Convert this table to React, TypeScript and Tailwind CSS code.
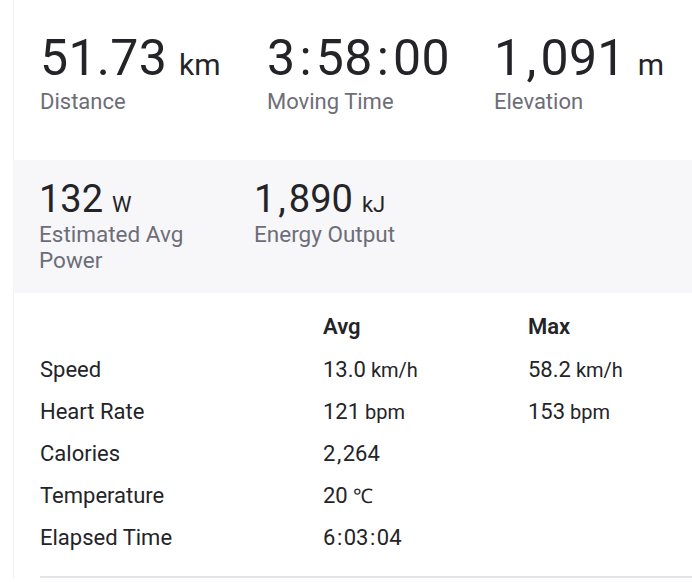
const topStats = [
  { value: '51.73', unit: 'km', label: 'Distance' },
  { value: '3:58:00', unit: '', label: 'Moving Time' },
  { value: '1,091', unit: 'm', label: 'Elevation' },
]

const rows = [
  { name: 'Speed', avg: '13.0', avgUnit: 'km/h', max: '58.2', maxUnit: 'km/h' },
  { name: 'Heart Rate', avg: '121', avgUnit: 'bpm', max: '153', maxUnit: 'bpm' },
  { name: 'Calories', avg: '2,264', avgUnit: '', max: '', maxUnit: '' },
  { name: 'Temperature', avg: '20', avgUnit: '℃', max: '', maxUnit: '' },
  { name: 'Elapsed Time', avg: '6:03:04', avgUnit: '', max: '', maxUnit: '' },
]

// the original face has roomier colons and commas than Roboto, so pad them out
function Num({ text, pad }: { text: string; pad: string }) {
  return (
    <>
      {text.split(/([:,])/).map((part, i) =>
        part === ':' || part === ',' ? (
          <span key={i} className={pad}>
            {part}
          </span>
        ) : (
          part
        )
      )}
    </>
  )
}

export default function App() {
  return (
    <div className="w-[692px] h-[582px] overflow-hidden bg-white text-[#242428] font-['Roboto',sans-serif]">
      {/* Headline stats */}
      <div className="ml-[13px] h-[160px] border-l border-[#efeff2] pl-[26px] pt-[30px] flex">
        {topStats.map((s) => (
          <div key={s.label} className="w-[227px] shrink-0">
            <div className="h-[59px] leading-[56px] whitespace-nowrap">
              <span className="text-[50px] tracking-[0.3px]">
                <Num text={s.value} pad="mx-[4px]" />
              </span>
              {s.unit && <span className="ml-[12px] text-[30px]">{s.unit}</span>}
            </div>
            <div className="text-[22px] leading-[26px] text-[#6d6d78]">{s.label}</div>
          </div>
        ))}
      </div>

      {/* Power */}
      <div className="ml-[13px] h-[133px] bg-[#f7f7fa] pl-[26px] pt-[19px] flex">
        <div className="w-[190px] mr-[25px]">
          <div className="h-[42px] leading-[40px] whitespace-nowrap">
            <span className="text-[38px]">132</span>
            <span className="ml-[9px] text-[22px]">W</span>
          </div>
          <div className="text-[22.5px] leading-[26px] text-[#6d6d78]">Estimated Avg Power</div>
        </div>
        <div className="w-[200px]">
          <div className="h-[42px] leading-[40px] whitespace-nowrap">
            <span className="text-[38px]">
              <Num text="1,890" pad="mx-[3px]" />
            </span>
            <span className="ml-[9px] text-[22px]">kJ</span>
          </div>
          <div className="text-[22.5px] leading-[26px] text-[#6d6d78]">Energy Output</div>
        </div>
      </div>

      {/* Avg / Max table */}
      <div className="ml-[13px] border-l border-[#efeff2] pl-[26px] pt-[12px]">
        <div className="border-b-2 border-[#e3e3ea] pb-[18px]">
          <div className="grid grid-cols-[283px_205px_1fr] h-[43px] items-center text-[22px] font-semibold">
            <span />
            <span>Avg</span>
            <span>Max</span>
          </div>
          {rows.map((r) => (
            <div key={r.name} className="grid grid-cols-[283px_205px_1fr] h-[42px] items-center text-[22px]">
              <span>{r.name}</span>
              <span>
                <Num text={r.avg} pad="mx-[1.5px]" />
                {r.avgUnit && <span className="ml-[5px] text-[20px]">{r.avgUnit}</span>}
              </span>
              <span>
                <Num text={r.max} pad="mx-[1.5px]" />
                {r.maxUnit && <span className="ml-[5px] text-[20px]">{r.maxUnit}</span>}
              </span>
            </div>
          ))}
        </div>
      </div>
    </div>
  )
}
